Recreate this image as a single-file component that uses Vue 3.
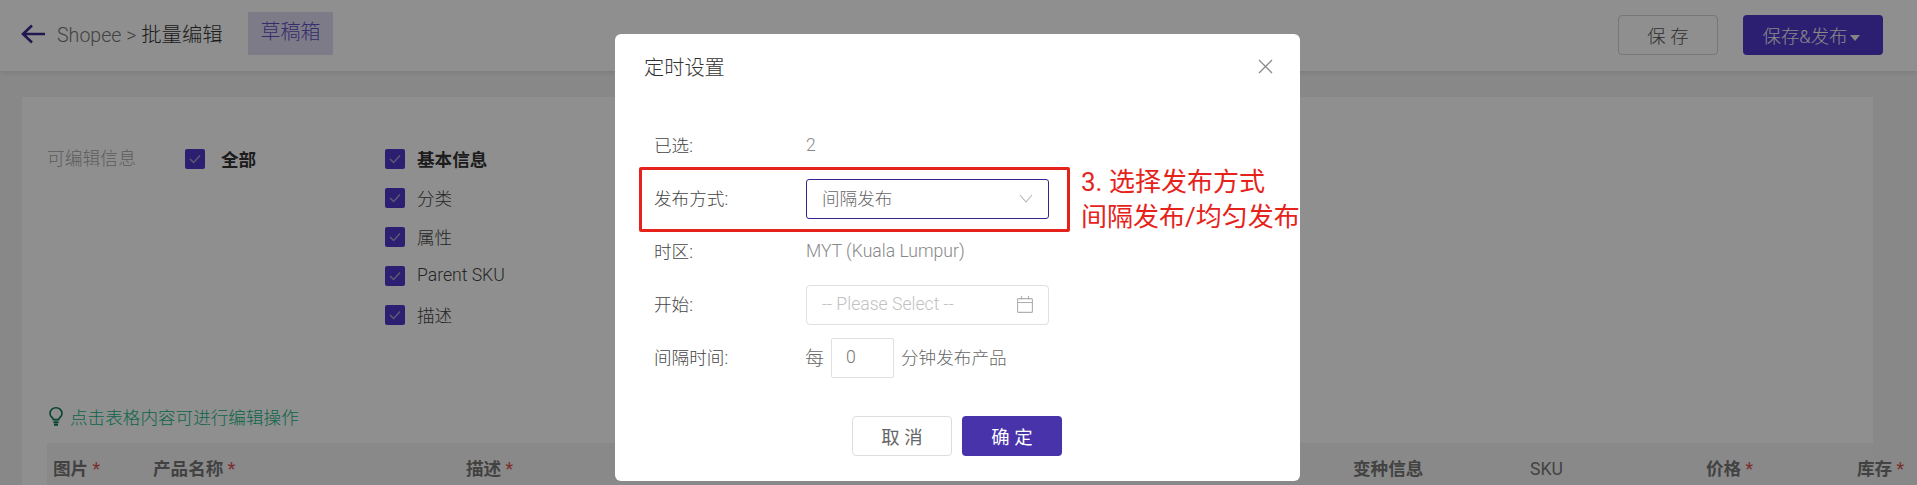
<script setup>
const basics = [
  { label: '基本信息', bold: true },
  { label: '分类' },
  { label: '属性' },
  { label: 'Parent SKU' },
  { label: '描述' },
]
const columns = [
  { label: '图片', req: true, w: 100 },
  { label: '产品名称', req: true, w: 313 },
  { label: '描述', req: true, w: 887 },
  { label: '变种信息', w: 177 },
  { label: 'SKU', w: 176, light: true },
  { label: '价格', req: true, w: 151 },
  { label: '库存', req: true, w: 60 },
]
const gridCols = columns.map((c) => c.w + 'px').join(' ')
</script>

<template>
  <div class="page">
    <header class="topbar">
      <div class="crumbs">
        <svg class="back" width="24" height="20" viewBox="0 0 24 20" fill="none" stroke="#3a2c8c" stroke-width="2.6">
          <path d="M24 10H2M11 1.5 2 10l9 8.5" />
        </svg>
        <span class="path">Shopee &gt; <span class="path-strong">批量编辑</span></span>
        <span class="draft">草稿箱</span>
      </div>
      <div class="actions">
        <button class="btn-save">保 存</button>
        <button class="btn-publish">保存&amp;发布<i class="caret"></i></button>
      </div>
    </header>

    <main class="card">
      <section class="filters">
        <div class="filter-label">可编辑信息</div>
        <label class="check all">
          <span class="box"><svg width="12" height="10" viewBox="0 0 12 10" fill="none" stroke="#aaa6c6" stroke-width="1.4"><path d="M1 5l3.6 3.6L11 1.5" /></svg></span>
          <b>全部</b>
        </label>
        <div class="basics">
          <label v-for="item in basics" :key="item.label" class="check">
            <span class="box"><svg width="12" height="10" viewBox="0 0 12 10" fill="none" stroke="#aaa6c6" stroke-width="1.4"><path d="M1 5l3.6 3.6L11 1.5" /></svg></span>
            <b v-if="item.bold">{{ item.label }}</b>
            <span v-else class="check-text">{{ item.label }}</span>
          </label>
        </div>
      </section>
      <div class="tip">
        <svg width="14" height="19" viewBox="0 0 14 19" fill="none" stroke="#0d7a58" stroke-width="1.6">
          <path d="M4.4 12.6C4 10.6 1 9.6 1 6.4A6 5.6 0 0 1 13 6.4c0 3.2-3 4.2-3.4 6.2z" />
          <path d="M4.5 15.2h5M5 17.8h4" stroke-width="2" />
        </svg>
        <span>点击表格内容可进行编辑操作</span>
      </div>
      <div class="thead" :style="{ gridTemplateColumns: gridCols }">
        <div v-for="c in columns" :key="c.label" class="th" :class="{ light: c.light }">
          {{ c.label }}<em v-if="c.req"> *</em>
        </div>
      </div>
    </main>

    <div class="mask"></div>

    <div class="modal">
      <div class="modal-head">
        <span class="modal-title">定时设置</span>
        <svg class="close" width="15" height="15" viewBox="0 0 15 15" stroke="#8a8a8a" stroke-width="1.3">
          <path d="M1 1l13 13M14 1 1 14" />
        </svg>
      </div>
      <div class="modal-body">
        <div class="row"><span class="lbl">已选:</span><span class="val">2</span></div>
        <div class="row">
          <span class="lbl">发布方式:</span>
          <div class="field focus">
            <span class="field-value">间隔发布</span>
            <svg width="14" height="9" viewBox="0 0 14 9" fill="none" stroke="#b5b5b5" stroke-width="1.1"><path d="M1 1l6 7 6-7" /></svg>
          </div>
        </div>
        <div class="row"><span class="lbl">时区:</span><span class="val">MYT (Kuala Lumpur)</span></div>
        <div class="row">
          <span class="lbl">开始:</span>
          <div class="field">
            <span class="placeholder">-- Please Select --</span>
            <svg width="16" height="17" viewBox="0 0 16 17" fill="none" stroke="#b0b0b0" stroke-width="1.1">
              <rect x="0.6" y="2.6" width="14.8" height="13.8" rx="1" />
              <path d="M0.6 6.5h14.8M4.5 0v3.5M11.5 0v3.5" />
            </svg>
          </div>
        </div>
        <div class="row">
          <span class="lbl">间隔时间:</span>
          <div class="interval">
            <span class="txt every">每</span>
            <span class="num">0</span>
            <span class="txt">分钟发布产品</span>
          </div>
        </div>
      </div>
      <div class="modal-foot">
        <button class="btn-cancel">取 消</button>
        <button class="btn-ok">确 定</button>
      </div>
      <div class="red-box"></div>
      <div class="note">3. 选择发布方式<br />间隔发布/均匀发布</div>
    </div>
  </div>
</template>

<style>
html, body { margin: 0; overflow: hidden; }
</style>

<style scoped>
.page {
  position: relative;
  width: 1917px;
  height: 485px;
  overflow: hidden;
  background: #f3f3f3;
  font-family: Roboto, "Noto Sans CJK SC", sans-serif;
  font-weight: 300;
  font-size: 17.6px;
  color: #333;
}
.topbar {
  height: 71px;
  box-sizing: border-box;
  padding: 12px 34px 0 21px;
  background: #fff;
  display: flex;
  justify-content: space-between;
  align-items: flex-start;
  box-shadow: 0 1px 6px rgba(0, 0, 0, .12);
  position: relative;
}
.crumbs { display: flex; align-items: center; height: 43px; }
.back { margin-right: 12px; }
.path { color: #777; font-size: 19.6px; width: 191px; white-space: nowrap; padding-bottom: 1px; }
.path-strong { color: #333; font-size: 20.4px; }
.draft {
  height: 43px;
  width: 85px;
  line-height: 41px;
  text-align: center;
  font-size: 20px;
  color: #5f4fc0;
  background: #e0dcf3;
}
.actions { display: flex; gap: 25px; padding-top: 3px; }
.actions button { height: 40px; border-radius: 4px; font-family: inherit; font-size: 18.4px; font-weight: 300; }
.btn-save { width: 100px; padding: 0; background: transparent; border: 1px solid #d2d2d2; color: #555; }
.btn-publish { width: 140px; padding: 0 3px 0 0; background: #4f38cc; border: 0; color: #f4f4f4; }
.caret {
  display: inline-block;
  margin-left: 3px;
  vertical-align: 2px;
  border: 5px solid transparent;
  border-top: 6px solid #eee;
  border-bottom: 0;
}
.card {
  margin: 26px 44px 0 22px;
  height: 400px;
  background: #fff;
  padding-left: 25px;
}
.filters { display: flex; height: 300px; padding-top: 52px; box-sizing: border-box; }
.filter-label { width: 138px; color: #a8a8a8; font-size: 17.8px; line-height: 20px; }
.all { width: 200px; height: 20px; align-self: flex-start; }
.basics { display: flex; flex-direction: column; gap: 19px; }
.check { display: flex; align-items: center; height: 20px; color: #333; }
.check b { font-weight: 700; color: #333; padding-bottom: 2px; }
.box {
  width: 20px;
  height: 20px;
  flex: none;
  margin-right: 12px;
  border-radius: 2px;
  background: #4f38cc;
  display: flex;
  align-items: center;
  justify-content: center;
}
.all .box { margin-right: 16px; }
.check-text { color: #444; padding-bottom: 2px; }
.tip {
  display: flex;
  align-items: center;
  height: 22px;
  margin-top: 8px;
  margin-left: 2px;
  color: #14b583;
  gap: 7px;
}
.thead {
  display: grid;
  height: 50px;
  margin-top: 16px;
  padding: 12px 0 0 6px;
  box-sizing: border-box;
  width: 1826px;
  background: #f5f5f5;
}
.th { font-weight: 700; color: #777; white-space: nowrap; line-height: 28px; }
.th.light { font-weight: 400; }
.th em { font-style: normal; color: #d9534f; font-weight: 400; }
.mask { position: absolute; inset: 0; background: rgba(0, 0, 0, .44); }
.modal {
  position: absolute;
  left: 615px;
  top: 34px;
  width: 685px;
  height: 447px;
  background: #fff;
  border-radius: 6px;
  color: #555;
}
.modal-head {
  height: 64px;
  padding: 0 27px 0 29px;
  display: flex;
  align-items: center;
  justify-content: space-between;
}
.modal-title { font-size: 20.2px; color: #333; }
.modal-body { padding: 21px 0 0 39px; }
.row { display: flex; align-items: center; height: 53px; }
.lbl { width: 152px; color: #444; flex: none; padding-bottom: 2px; }
.val { color: #888; padding-bottom: 2px; }
.field {
  width: 243px;
  height: 40px;
  box-sizing: border-box;
  border: 1px solid #e0e0e0;
  border-radius: 4px;
  padding: 0 15px;
  display: flex;
  align-items: center;
  justify-content: space-between;
}
.field.focus { border-color: #33258c; border-radius: 3px; }
.field-value { color: #666; padding-bottom: 2px; }
.placeholder { color: #c2c2c2; padding-bottom: 2px; }
.interval { display: flex; align-items: center; gap: 7px; margin-left: -1px; color: #666; }
.txt { padding-bottom: 2px; }
.every { font-size: 19px; }
.num {
  width: 63px;
  height: 40px;
  line-height: 36px;
  box-sizing: border-box;
  border: 1px solid #e0e0e0;
  border-radius: 2px;
  padding-left: 14px;
  color: #777;
}
.modal-foot { display: flex; justify-content: center; gap: 10px; margin: 32px 1px 0 0; }
.modal-foot button {
  width: 100px;
  height: 40px;
  border-radius: 4px;
  font-family: inherit;
  font-size: 18.4px;
  font-weight: 400;
  padding: 0;
}
.btn-cancel { background: #fff; border: 1px solid #ddd; color: #666; }
.btn-ok { background: #4833ab; border: 0; color: #fff; }
.red-box {
  position: absolute;
  left: 24px;
  top: 133px;
  width: 431px;
  height: 65px;
  box-sizing: border-box;
  border: 3px solid #e6231b;
  border-radius: 2px;
}
.note {
  position: absolute;
  left: 466px;
  top: 131px;
  color: #e6231b;
  font-size: 26px;
  font-weight: 400;
  line-height: 35px;
  white-space: nowrap;
}
</style>
